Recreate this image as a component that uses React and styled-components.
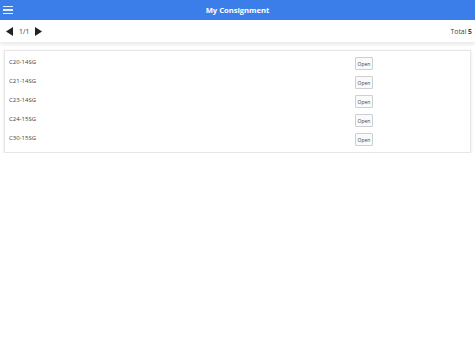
import React from "react";
import styled, { createGlobalStyle } from "styled-components";

const Global = createGlobalStyle`
  html, body { margin: 0; padding: 0; background: #fff; }
  body { font-family: "Open Sans", "Noto Sans", sans-serif; color: #333; }
`;

const Header = styled.header`
  height: 20px;
  background: #3b7ee9;
  display: flex;
  align-items: center;
  position: relative;
  color: #fff;
`;

const MenuButton = styled.div`
  position: absolute;
  left: 3px;
  top: 5px;
  width: 10px;
  height: 10px;
  display: flex;
  flex-direction: column;
  justify-content: space-between;
  padding: 1px 0;
  box-sizing: border-box;
  span { display: block; height: 1.4px; background: #e6efff; }
`;

const Title = styled.h1`
  margin: 0;
  flex: 1;
  text-align: center;
  font-size: 7.6px;
  font-weight: 700;
  line-height: 20px;
`;

const Toolbar = styled.div`
  height: 21px;
  display: flex;
  align-items: center;
  justify-content: space-between;
  padding: 1px 3px 0 6px;
  box-shadow: 0 2px 3px rgba(0, 0, 0, 0.08);
  border-bottom: 1px solid #eee;
`;

const Pager = styled.div`
  display: flex;
  align-items: center;
  gap: 6px;
  font-size: 6.8px;
  color: #333;
`;

const Arrow = styled.svg`
  width: 7px;
  height: 9px;
  display: block;
`;

const Total = styled.div`
  font-size: 6.8px;
  color: #444;
  b { font-weight: 700; }
`;

const Card = styled.div`
  margin: 7px 4px 0 4px;
  border: 1px solid #e6e6e6;
  box-shadow: 0 1px 3px rgba(0, 0, 0, 0.1);
  padding: 3px 0 3px 0;
  background: #fff;
`;

const Row = styled.div`
  height: 19px;
  display: grid;
  grid-template-columns: 346px auto;
  align-items: center;
  padding-left: 4px;
`;

const Code = styled.span`
  font-size: 6px;
  color: #444;
  margin-top: -4px;
`;

const OpenButton = styled.button`
  width: 18px;
  height: 13px;
  padding: 0;
  border: 1px solid #cfcfcf;
  border-radius: 1px;
  background: #fafafa;
  font-family: "Open Sans", sans-serif;
  font-size: 5px;
  color: #444;
  display: flex;
  align-items: center;
  justify-content: center;
`;

const items = ["C20-14SG", "C21-14SG", "C23-14SG", "C24-15SG", "C30-15SG"];

export default function App() {
  return (
    <>
      <Global />
      <Header>
        <MenuButton><span /><span /><span /></MenuButton>
        <Title>My Consignment</Title>
      </Header>
      <Toolbar>
        <Pager>
          <Arrow viewBox="0 0 7 9"><polygon points="7,0 7,9 0,4.5" fill="#222" /></Arrow>
          <span>1/1</span>
          <Arrow viewBox="0 0 7 9"><polygon points="0,0 0,9 7,4.5" fill="#222" /></Arrow>
        </Pager>
        <Total>Total <b>5</b></Total>
      </Toolbar>
      <Card>
        {items.map((it) => (
          <Row key={it}>
            <Code>{it}</Code>
            <OpenButton>Open</OpenButton>
          </Row>
        ))}
      </Card>
    </>
  );
}
